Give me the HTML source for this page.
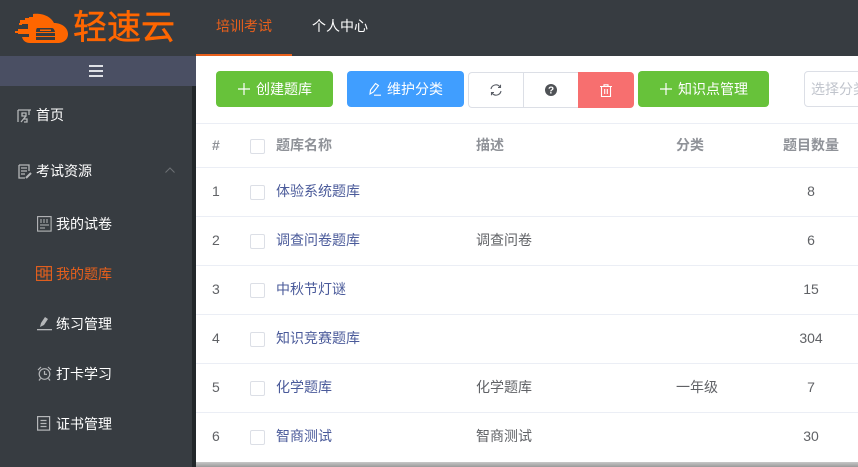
<!DOCTYPE html>
<html><head><meta charset="utf-8">
<style>
html,body{margin:0;padding:0;width:858px;height:467px;overflow:hidden;background:#fff}
body{position:relative;font-family:"Liberation Sans","Noto Sans CJK SC",sans-serif;font-size:14px}
.a{position:absolute;white-space:nowrap}
svg{position:absolute;display:block}
.hd{left:0;top:0;width:858px;height:56px;background:#373c41}
.sb{left:0;top:56px;width:192px;height:411px;background:#373c41}
.sd{left:192px;top:86px;width:4px;height:381px;background:#22272a}
.m{color:#fff;line-height:20px;font-size:14px}
.btn{border-radius:4px;height:36px;top:71px;color:#fff;line-height:36px;font-size:14px}
.th{color:#8f9298;font-weight:bold;font-size:14px;line-height:20px;top:135px}
.ln{left:196px;width:662px;height:1px;background:#ebeef5}
.c{color:#606266;font-size:14px;line-height:20px}
.n{color:#4a5a9a;font-size:14px;line-height:20px;left:276px}
.cb{left:250px;width:13px;height:13px;border:1px solid #dcdfe6;border-radius:2px;background:#fff}
.num{left:212px}
.cnt{left:761px;width:100px;text-align:center}
</style></head><body>
<div class="a hd"></div>
<div class="a sb"></div>
<div class="a" style="left:0;top:56px;width:196px;height:30px;background:#4a4f63"></div>
<div class="a sd"></div>

<svg style="left:0;top:0" width="72" height="50" viewBox="0 0 72 50">
<path fill="#ff6600" d="M33 14C40 13 50 15 54 23C62 23 68 28 68 34C68 40 63 43 58 43H30C26 43 23 41 22 37H29V34H18V29H28V24H20V20H29V17H33z"/>
<g fill="#ff6600"><rect x="25" y="18" width="4" height="2"/><rect x="15" y="31" width="3" height="2"/><rect x="19" y="23" width="3" height="2"/></g>
<g fill="#373c41"><path d="M37 28h15q2 0 3 4H36q0-3 1-4z"/><rect x="36" y="33.500" width="19" height="1.500" fill="#ff6600"/><rect x="36" y="33" width="19" height="3"/><rect x="36" y="37" width="19" height="3"/></g>
<g fill="#ff6600"><rect x="40" y="29.500" width="11" height="1.500"/></g>
</svg>
<div class="a" style="left:73px;top:8px;color:#ff6600;font-size:34px;line-height:40px;-webkit-text-stroke:.5px #ff6600">轻速云</div>

<div class="a" style="left:216px;top:16px;color:#e8601c;font-size:14px;line-height:20px">培训考试</div>
<div class="a" style="left:312px;top:16px;color:#fff;font-size:14px;line-height:20px">个人中心</div>
<div class="a" style="left:196px;top:54px;width:96px;height:2px;background:#e8601c"></div>

<svg style="left:89px;top:65px" width="14" height="12"><g fill="#dfe1e6"><rect y="0" width="14" height="2"/><rect y="5" width="14" height="2"/><rect y="10" width="14" height="2"/></g></svg>

<svg style="left:17px;top:108px" width="15" height="15" viewBox="0 0 15 15" fill="none" stroke="#b5b7b9" stroke-width="1.300"><path d="M1 2h13M1 2v12M5 5h4v3H5zM4 14l5-6M7 11h3v3H7M12 2v5"/></svg>
<div class="a m" style="left:36px;top:105px">首页</div>

<svg style="left:18px;top:164px" width="14" height="15" viewBox="0 0 14 15" fill="none" stroke="#b5b7b9" stroke-width="1.300"><path d="M1 1h10v6M1 1v13h6M3 4h6M3 7h6M3 10h4"/><path d="M8 14l5-5" stroke-width="2"/></svg>
<div class="a m" style="left:36px;top:161px">考试资源</div>
<svg style="left:165px;top:167px" width="10" height="6" fill="none" stroke="#6d7175"><path d="M.5 5.500L5 1l4.500 4.500"/></svg>

<svg style="left:37px;top:216px" width="15" height="16" viewBox="0 0 15 16" fill="none" stroke="#b5b7b9" stroke-width="1.100"><rect x=".6" y=".6" width="13.500" height="14.500"/><path d="M3 4h9M3 6h9" stroke-dasharray="2 1"/><path d="M3 9h9M3 12h5"/></svg>
<div class="a m" style="left:56px;top:214px">我的试卷</div>

<svg style="left:36px;top:266px" width="16" height="15" viewBox="0 0 16 15" fill="none" stroke="#e8601c" stroke-width="1.100"><rect x=".6" y=".6" width="14.800" height="13.800"/><path d="M5 3h3v8H5zM0 5h5M0 9h5M11 1v13M8 5h8M8 9h8"/></svg>
<div class="a m" style="left:56px;top:264px;color:#e8601c">我的题库</div>

<svg style="left:37px;top:316px" width="15" height="15" viewBox="0 0 15 15"><path fill="#b5b7b9" d="M3 11l1-4 4-6 3 2-4 6z"/><rect x="0" y="13" width="15" height="1.300" fill="#b5b7b9"/></svg>
<div class="a m" style="left:56px;top:314px">练习管理</div>

<svg style="left:37px;top:366px" width="15" height="15" viewBox="0 0 15 15" fill="none" stroke="#b5b7b9" stroke-width="1.200"><circle cx="7.500" cy="8" r="5.300"/><path d="M7.500 5v3.300h2.500M1 4l3-3M14 4l-3-3M3.500 12.500L2 14.500M11.500 12.500l1.500 2"/></svg>
<div class="a m" style="left:56px;top:364px">打卡学习</div>

<svg style="left:37px;top:416px" width="14" height="15" viewBox="0 0 14 15" fill="none" stroke="#b5b7b9" stroke-width="1.200"><rect x=".6" y=".6" width="12" height="13.500"/><path d="M3.500 4.500h6M3.500 7.500h6M3.500 10.500h6"/></svg>
<div class="a m" style="left:56px;top:414px">证书管理</div>

<div class="a btn" style="left:216px;width:117px;background:#67c23a"></div>
<svg style="left:238px;top:83px" width="12" height="12" stroke="#fff" stroke-width="1.200"><path d="M6 0v12M0 6h12"/></svg>
<div class="a btn" style="left:256px;">创建题库</div>

<div class="a btn" style="left:347px;width:117px;background:#409eff"></div>
<svg style="left:368px;top:82px" width="14" height="14" viewBox="0 0 14 14" fill="none" stroke="#fff" stroke-width="1.100"><path d="M2 12l.5-4L7.500 1.500l3 2L5.500 10zM6 13.200h7"/></svg>
<div class="a btn" style="left:387px">维护分类</div>

<div class="a" style="left:468px;top:72px;width:110px;height:34px;border:1px solid #dcdfe6;border-right:0;border-radius:4px 0 0 4px;background:#fff"></div>
<div class="a" style="left:523px;top:72px;width:1px;height:36px;background:#dcdfe6"></div>
<svg style="left:490px;top:84px" width="12" height="12" viewBox="0 0 12 12" fill="none" stroke="#5a5e66" stroke-width="1.100"><path d="M1 5a5 5 0 0 1 9-2M11 7a5 5 0 0 1-9 2"/><path d="M10.500 .8v2.700H8M1.500 11.200V8.500H4"/></svg>
<svg style="left:545px;top:84px" width="12" height="12" viewBox="0 0 12 12"><circle cx="6" cy="6" r="6" fill="#4f5256"/><text x="6" y="9.500" font-size="10" font-weight="bold" fill="#fff" text-anchor="middle" font-family="Liberation Sans">?</text></svg>
<div class="a" style="left:578px;top:72px;width:56px;height:36px;background:#f76f6f;border-radius:0 4px 4px 0"></div>
<svg style="left:600px;top:84px" width="12" height="13" viewBox="0 0 12 13" fill="none" stroke="#fff" stroke-width="1.100"><path d="M0 2.500h12M4 2.500V.8h4v1.700M1.500 2.500v10h9v-10M4.700 5v5M7.300 5v5"/></svg>

<div class="a btn" style="left:638px;width:131px;background:#67c23a"></div>
<svg style="left:660px;top:83px" width="12" height="12" stroke="#fff" stroke-width="1.200"><path d="M6 0v12M0 6h12"/></svg>
<div class="a btn" style="left:678px">知识点管理</div>

<div class="a" style="left:804px;top:71px;width:80px;height:34px;border:1px solid #dcdfe6;border-radius:4px;background:#fff"></div>
<div class="a" style="left:811px;top:79px;color:#c0c4cc;font-size:14px;line-height:20px">选择分类</div>

<div class="a ln" style="top:123px"></div>
<div class="a th" style="left:212px">#</div>
<div class="a cb" style="top:139px"></div>
<div class="a th" style="left:276px">题库名称</div>
<div class="a th" style="left:476px">描述</div>
<div class="a th" style="left:676px">分类</div>
<div class="a th" style="left:783px">题目数量</div>
<div class="a ln" style="top:167px"></div>

<div class="a c num" style="top:181px">1</div><div class="a cb" style="top:185px"></div><div class="a n" style="top:181px">体验系统题库</div><div class="a c cnt" style="top:181px">8</div>
<div class="a ln" style="top:216px"></div>
<div class="a c num" style="top:230px">2</div><div class="a cb" style="top:234px"></div><div class="a n" style="top:230px">调查问卷题库</div><div class="a c" style="left:476px;top:230px">调查问卷</div><div class="a c cnt" style="top:230px">6</div>
<div class="a ln" style="top:265px"></div>
<div class="a c num" style="top:279px">3</div><div class="a cb" style="top:283px"></div><div class="a n" style="top:279px">中秋节灯谜</div><div class="a c cnt" style="top:279px">15</div>
<div class="a ln" style="top:314px"></div>
<div class="a c num" style="top:328px">4</div><div class="a cb" style="top:332px"></div><div class="a n" style="top:328px">知识竞赛题库</div><div class="a c cnt" style="top:328px">304</div>
<div class="a ln" style="top:363px"></div>
<div class="a c num" style="top:377px">5</div><div class="a cb" style="top:381px"></div><div class="a n" style="top:377px">化学题库</div><div class="a c" style="left:476px;top:377px">化学题库</div><div class="a c" style="left:676px;top:377px">一年级</div><div class="a c cnt" style="top:377px">7</div>
<div class="a ln" style="top:412px"></div>
<div class="a c num" style="top:426px">6</div><div class="a cb" style="top:430px"></div><div class="a n" style="top:426px">智商测试</div><div class="a c" style="left:476px;top:426px">智商测试</div><div class="a c cnt" style="top:426px">30</div>
<div class="a" style="left:196px;top:462px;width:662px;height:5px;background:linear-gradient(#c8c8c8,#9a9a9a)"></div>
</body></html>
